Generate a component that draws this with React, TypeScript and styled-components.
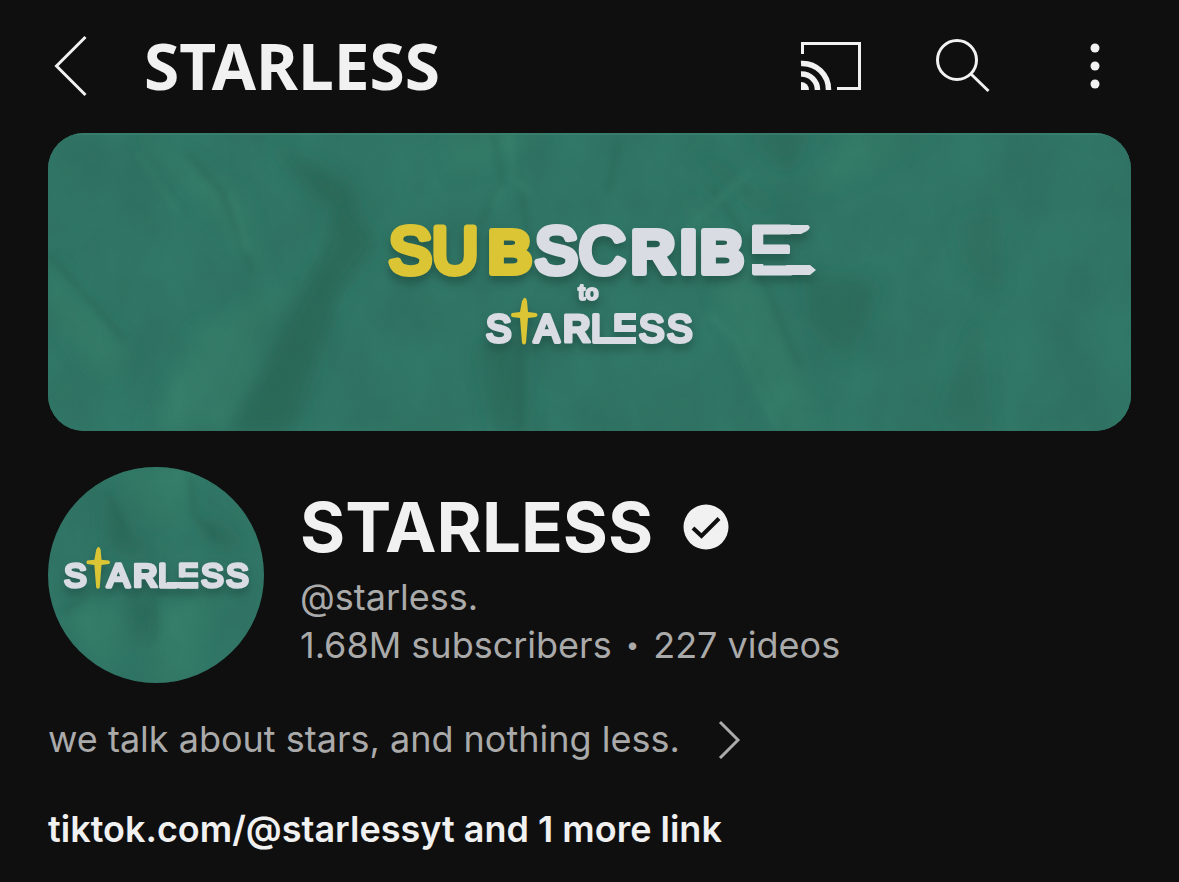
import React from "react";
import styled, { createGlobalStyle } from "styled-components";

const GlobalStyle = createGlobalStyle`
  * { box-sizing: border-box; }
  body {
    margin: 0;
    background: #0f0f0f;
    color: #f1f1f1;
    font-family: Inter, "Liberation Sans", sans-serif;
  }
  button {
    border: 0;
    padding: 0;
    background: none;
    color: inherit;
    font: inherit;
    cursor: pointer;
  }
`;

const Page = styled.div`
  display: flex;
  flex-direction: column;
  padding: 0 48px 28px;
`;

const TopBar = styled.header`
  display: flex;
  align-items: center;
  height: 132px;
  margin-bottom: 1px;
`;

const IconButton = styled.button<{ $width: number }>`
  display: flex;
  flex: none;
  align-items: center;
  justify-content: center;
  width: ${(p) => p.$width}px;
  height: 72px;
`;

const BarTitle = styled.div`
  flex: 1;
  margin-left: 36px;
  font-family: "Noto Sans", "Open Sans", sans-serif;
  font-size: 64px;
  font-weight: 700;
  line-height: 84px;
`;

const Actions = styled.nav`
  display: flex;
  gap: 60px;
`;

const Banner = styled.div`
  aspect-ratio: 1083 / 298;
  border-radius: 36px;
  overflow: hidden;
  background: #2f7465;
`;

const Art = styled.svg`
  display: block;
  width: 100%;
  height: 100%;
`;

const Channel = styled.section`
  display: flex;
  align-items: center;
  gap: 36px;
  margin-top: 36px;
`;

const Avatar = styled.div`
  flex: none;
  width: 216px;
  height: 216px;
  border-radius: 50%;
  overflow: hidden;
`;

const Info = styled.div`
  padding-top: 4px;
`;

const Name = styled.h1`
  display: flex;
  align-items: center;
  gap: 30px;
  margin: 0 0 4px;
  font-size: 69px;
  font-weight: 700;
  line-height: 84px;
`;

const Meta = styled.p`
  display: flex;
  gap: 14px;
  margin: 0;
  color: #aaaaaa;
  font-size: 36px;
  line-height: 48px;
`;

const Dot = styled.span`
  font-size: 24px;
`;

const Description = styled.button`
  display: flex;
  align-items: center;
  align-self: flex-start;
  gap: 38px;
  margin-top: 32px;
  && {
    color: #aaaaaa;
    font-size: 36px;
    line-height: 48px;
  }
`;

const Links = styled.a`
  align-self: flex-start;
  margin-top: 42px;
  color: #f1f1f1;
  font-size: 36px;
  font-weight: 600;
  line-height: 48px;
  text-decoration: none;
`;

const Letters = styled.text<{ $bold?: boolean }>`
  font-family: "Liberation Sans", Arial, sans-serif;
  font-weight: ${(p) => (p.$bold ? 700 : 400)};
  stroke-linejoin: round;
`;

const WHITE = "#d9dce3";
const YELLOW = "#dcc535";

function PaperDefs({ id }: { id: string }) {
  return (
    <defs>
      <filter id={`${id}-soft`} x="-20%" y="-20%" width="140%" height="140%">
        <feGaussianBlur stdDeviation="9" />
      </filter>
      <filter id={`${id}-fold`} x="-50%" y="-20%" width="200%" height="140%">
        <feGaussianBlur stdDeviation="3" />
      </filter>
      <filter id={`${id}-grain`} x="0" y="0" width="100%" height="100%" colorInterpolationFilters="sRGB">
        <feTurbulence type="fractalNoise" baseFrequency="0.018 0.012" numOctaves="4" seed="8" />
        <feColorMatrix values="0 0 0 0 0.16  0 0 0 0 0.38  0 0 0 0 0.33  1.2 0 0 0 -0.3" />
      </filter>
      <filter id={`${id}-shadow`} x="-10%" y="-20%" width="120%" height="160%" colorInterpolationFilters="sRGB">
        <feDropShadow dx="0" dy="6" stdDeviation="4" floodColor="#173f36" floodOpacity="0.5" />
      </filter>
    </defs>
  );
}

function StarlessLogo({ id }: { id: string }) {
  return (
    <g>
      <clipPath id={`${id}-e`}>
        <path d="M120 0H151V35H120ZM120 40H151V52H120Z" />
      </clipPath>
      <Letters x="1 49" y="45" fontSize="38" fill={WHITE} stroke={WHITE} strokeWidth="4">
        SA
      </Letters>
      <Letters $bold x="78" y="45" fontSize="38" fill={WHITE} stroke={WHITE} strokeWidth="3">
        R
      </Letters>
      <Letters x="106" y="45" fontSize="38" fill={WHITE} stroke={WHITE} strokeWidth="4">
        L
      </Letters>
      <Letters x="128" y="45" fontSize="38" fill={WHITE} stroke={WHITE} strokeWidth="4" clipPath={`url(#${id}-e)`}>
        E
      </Letters>
      <path d="M116 40h35v7h-35z" fill={WHITE} />
      <Letters x="154 182" y="45" fontSize="38" fill={WHITE} stroke={WHITE} strokeWidth="4">
        SS
      </Letters>
      <path
        d="M39 1Q41 0 42 4L43 15L51 16Q54 18 51 20L43 21L41 46Q39 49 37 46L35 21L27 20Q25 18 27 16L35 15L37 4Z"
        fill={YELLOW}
      />
    </g>
  );
}

function BannerArt() {
  return (
    <Art viewBox="0 0 1083 298" preserveAspectRatio="xMidYMid slice" role="img" aria-label="Subscribe to Starless">
      <PaperDefs id="banner" />
      <clipPath id="banner-wide-e">
        <path d="M700 80H780V121H700ZM700 131H780V150H700Z" />
      </clipPath>
      <rect width="1083" height="298" fill="#327868" />
      <g filter="url(#banner-soft)">
        <path d="M0 130L80 220L60 250L0 180ZM90 0L190 60L220 150L175 90ZM100 298L150 200L240 150L180 298ZM400 0H500L410 40Z" fill="#37806a" opacity=".8" />
        <path d="M180 298L275 120L290 60L330 110L290 160L245 298ZM220 10L300 50L310 85L270 65Z" fill="#29604f" opacity=".6" />
        <path d="M640 60L740 190L770 298H730L680 190ZM760 60L800 0H880L810 40Z" fill="#37806a" opacity=".6" />
        <path d="M760 140L830 150L800 230L760 190ZM430 215L480 190V298H445ZM700 0H760L740 40ZM640 10L740 80L700 70Z" fill="#29604f" opacity=".4" />
        <path d="M910 90L950 80V160L920 130ZM890 290L930 180L940 298Z" fill="#2a6355" opacity=".3" />
      </g>
      <g filter="url(#banner-fold)" fill="none" strokeWidth="5" opacity=".4">
        <path d="M445 0L455 50L432 90M470 40L482 110M472 210V298M140 20L175 60L205 140M665 55L700 110L750 230M560 60L570 10M0 120L75 205" stroke="#28604f" />
        <path d="M462 0L466 45L482 62M455 55L445 75M90 20L130 80M183 60L200 120M660 180L690 210L730 298M635 100L700 40" stroke="#3f8a73" />
      </g>
      <rect width="1083" height="298" filter="url(#banner-grain)" opacity=".45" />
      <path d="M0 1H1083" stroke="#448a77" strokeWidth="2" opacity=".4" />
      <g filter="url(#banner-shadow)">
        <Letters x="341 384" y="140" fontSize="64" fill={YELLOW} stroke={YELLOW} strokeWidth="7">
          SU
        </Letters>
        <Letters $bold x="440" y="140" fontSize="61" fill={YELLOW} stroke={YELLOW} strokeWidth="6">
          B
        </Letters>
        <Letters x="487 531" y="140" fontSize="64" fill={WHITE} stroke={WHITE} strokeWidth="7">
          SC
        </Letters>
        <Letters $bold x="583 632 652" y="140" fontSize="61" fill={WHITE} stroke={WHITE} strokeWidth="6">
          RIB
        </Letters>
        <Letters x="701" y="140" fontSize="67" fill={WHITE} stroke={WHITE} strokeWidth="5" clipPath="url(#banner-wide-e)">
          E
        </Letters>
        <path d="M738 92L760 92Q764 94 759 98L753 101H738ZM738 132H762L768 137L762 142H738Z" fill={WHITE} />
        <Letters $bold x="530" y="167" fontSize="22" fill={WHITE} stroke={WHITE} strokeWidth="2">
          to
        </Letters>
        <svg x="437" y="164" width="212" height="52" viewBox="0 0 212 52">
          <StarlessLogo id="banner-logo" />
        </svg>
      </g>
    </Art>
  );
}

function AvatarArt() {
  return (
    <Art viewBox="0 0 216 216" role="img" aria-label="Starless">
      <PaperDefs id="avatar" />
      <rect width="216" height="216" fill="#327868" />
      <g filter="url(#avatar-soft)">
        <path d="M75 0H150L130 60L90 45ZM40 130L80 150L60 200L20 160ZM110 150L170 120L140 216H100Z" fill="#38816b" opacity=".7" />
        <path d="M60 20L80 70L110 90L60 80ZM145 15L155 50L200 80L160 75ZM80 130L110 130L90 190Z" fill="#29604f" opacity=".6" />
      </g>
      <path d="M143 10L146 48L170 70M62 30L75 65M106 130V175M15 145L45 125" fill="none" stroke="#28604f" strokeWidth="4" filter="url(#avatar-fold)" opacity=".5" />
      <rect width="216" height="216" filter="url(#avatar-grain)" opacity=".4" />
      <g filter="url(#avatar-shadow)">
        <svg x="15" y="79" width="190" height="47" viewBox="0 0 212 52">
          <StarlessLogo id="avatar-logo" />
        </svg>
      </g>
    </Art>
  );
}

export default function App() {
  return (
    <>
      <GlobalStyle />
      <Page>
        <TopBar>
          <IconButton $width={60} aria-label="Back">
            <svg width="60" height="72" viewBox="0 0 60 72" fill="none" stroke="#f1f1f1" strokeWidth="3">
              <path d="M37.500 7L8.500 36L37.500 65" />
            </svg>
          </IconButton>
          <BarTitle>STARLESS</BarTitle>
          <Actions aria-label="Channel actions">
            <IconButton $width={72} aria-label="Cast">
              <svg width="72" height="72" viewBox="0 0 72 72" fill="none" stroke="#f1f1f1">
                <path d="M7.500 24V13.500H64.500V58.500H42" strokeWidth="3" />
                <path d="M6 33.500A26 26 0 0 1 33.500 60M6 44A16 16 0 0 1 22.500 60" strokeWidth="5.500" />
                <path d="M6 52A8 8 0 0 1 14 60H6Z" fill="#f1f1f1" stroke="none" />
              </svg>
            </IconButton>
            <IconButton $width={72} aria-label="Search">
              <svg width="72" height="72" viewBox="0 0 72 72" fill="none" stroke="#f1f1f1" strokeWidth="3">
                <circle cx="30" cy="30" r="19.500" />
                <path d="M44 44L61.500 61" />
              </svg>
            </IconButton>
            <IconButton $width={72} aria-label="More options">
              <svg width="72" height="72" viewBox="0 0 72 72" fill="#f1f1f1">
                <circle cx="36" cy="18" r="4.500" />
                <circle cx="36" cy="36" r="4.500" />
                <circle cx="36" cy="54" r="4.500" />
              </svg>
            </IconButton>
          </Actions>
        </TopBar>
        <main>
          <Banner>
            <BannerArt />
          </Banner>
          <Channel>
            <Avatar>
              <AvatarArt />
            </Avatar>
            <Info>
              <Name>
                STARLESS
                <svg width="46" height="46" viewBox="0 0 46 46" role="img" aria-label="Verified">
                  <circle cx="23" cy="23" r="22.500" fill="#f1f1f1" />
                  <path d="M10 24L18.500 32L36 14.500" fill="none" stroke="#0f0f0f" strokeWidth="4" />
                </svg>
              </Name>
              <Meta>@starless.</Meta>
              <Meta>
                <span>1.68M subscribers</span>
                <Dot>•</Dot>
                <span>227 videos</span>
              </Meta>
            </Info>
          </Channel>
        </main>
        <Description>
          we talk about stars, and nothing less.
          <svg width="24" height="40" viewBox="0 0 24 40" fill="none" stroke="#aaaaaa" strokeWidth="3">
            <path d="M2 3L20 21L2 39" />
          </svg>
        </Description>
        <Links href="#links">tiktok.com/@starlessyt and 1 more link</Links>
      </Page>
    </>
  );
}
